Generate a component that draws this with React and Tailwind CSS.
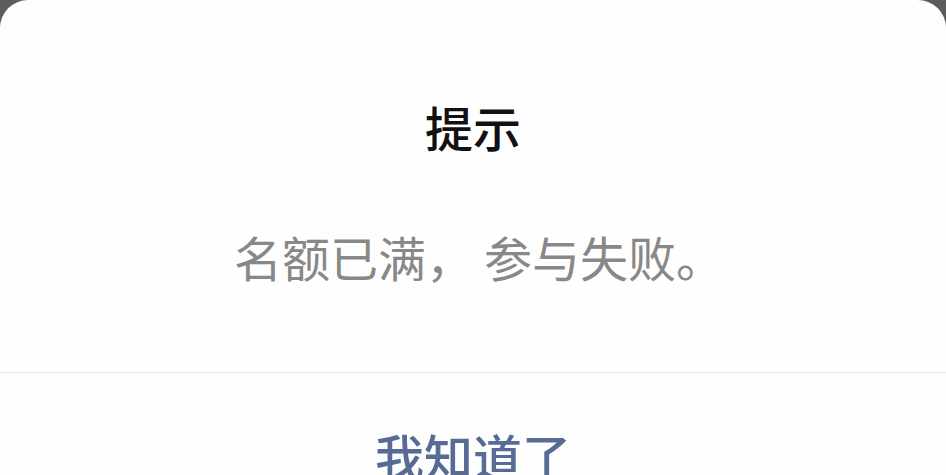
export default function App() {
  return (
    <div
      className="h-[475px] w-[946px] overflow-hidden bg-[#5c5c5c]"
      style={{ fontFamily: '"Noto Sans CJK SC", "Noto Sans", sans-serif' }}
    >
      <div className="flex h-full flex-col rounded-t-[28px] bg-[#fefefe]">
        <div className="flex shrink-0 flex-col items-center pt-[94px] pb-[84px]">
          <h1 className="text-[48px] leading-[64px] font-medium text-[#111111]">提示</h1>
          <p className="mt-[66px] pl-[12px] text-[48px] leading-[64px] text-[#888888]">
            名额已满<span className="mr-[10px]">，</span>参与失败。
          </p>
        </div>
        <div className="h-px shrink-0 bg-[#e2e2e2]" />
        <button className="shrink-0 pt-[50px] text-[49px] leading-[64px] font-medium text-[#576b95]">
          我知道了
        </button>
      </div>
    </div>
  );
}
